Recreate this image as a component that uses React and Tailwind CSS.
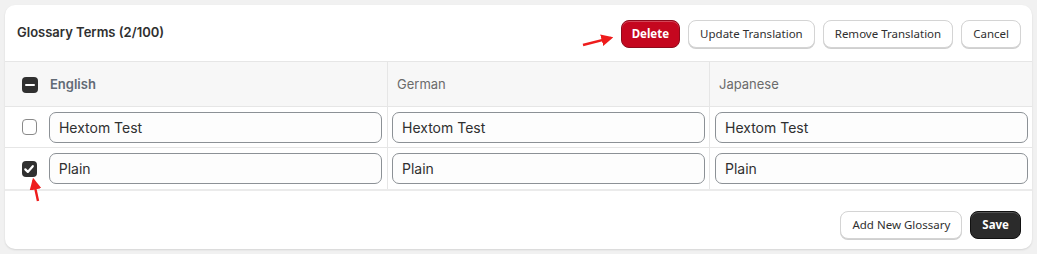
import React from "react";

const rows = [
  { en: "Hextom Test", de: "Hextom Test", ja: "Hextom Test", checked: false },
  { en: "Plain", de: "Plain", ja: "Plain", checked: true },
];

const Btn = ({ children, variant = "default" }) => {
  const styles = {
    default:
      "bg-white text-[#303030] border border-[#d4d4d4] shadow-[0_1px_0_#cfcfcf] font-normal px-[11px]",
    danger:
      "bg-[#c5071f] text-white border border-[#8e0b1c] shadow-[inset_0_1px_0_rgba(255,255,255,0.25)] font-bold px-[10px]",
    dark:
      "bg-[#2b2b2b] text-white border border-[#111] shadow-[inset_0_1px_0_rgba(255,255,255,0.2)] font-bold px-[11px]",
  };
  return (
    <button
      className={`h-[28px] rounded-[8px] text-[11.5px] leading-none font-['Noto_Sans',sans-serif] ${styles[variant]}`}
    >
      {children}
    </button>
  );
};

const Check = ({ state }) => {
  if (state === "none") {
    return <div className="w-[16px] h-[16px] rounded-[4px] border border-[#8a8a8a] bg-white" />;
  }
  return (
    <div className="w-[16px] h-[16px] rounded-[4px] bg-[#303030] flex items-center justify-center">
      {state === "minus" ? (
        <div className="w-[10px] h-[2px] bg-white rounded-full" />
      ) : (
        <svg width="12" height="12" viewBox="0 0 12 12">
          <path d="M2.3 6.4 L4.8 8.9 L9.8 3.2" fill="none" stroke="white" strokeWidth="2.2" strokeLinecap="round" strokeLinejoin="round" />
        </svg>
      )}
    </div>
  );
};

const Field = ({ value }) => (
  <input
    readOnly
    value={value}
    className="w-full h-[31px] px-[9px] rounded-[7px] border border-[#8c9196] bg-[#fdfdfd] text-[14px] text-[#303030] outline-none"
  />
);

export default function App() {
  return (
    <div className="w-[1037px] h-[254px] bg-[#f1f1f1] p-[5px] font-['Inter',sans-serif] relative">
      <div className="bg-white rounded-[10px] shadow-[0_1px_2px_rgba(0,0,0,0.12)] w-[1027px] h-[244px] overflow-hidden flex flex-col">
        <div className="flex items-center justify-between h-[56px] pl-[12px] pr-[11px]">
          <div className="text-[13px] font-semibold text-[#303030]">Glossary Terms (2/100)</div>
          <div className="flex gap-[8px] pt-[2px]">
            <Btn variant="danger">Delete</Btn>
            <Btn>Update Translation</Btn>
            <Btn>Remove Translation</Btn>
            <Btn>Cancel</Btn>
          </div>
        </div>

        <div className="grid grid-cols-[382px_322px_1fr] border-t border-[#e6e6e6] border-b-2 border-b-[#ebebeb]">
          <div className="h-[45px] bg-[#f7f7f7] flex items-center pl-[17px] gap-[12px] border-b border-[#e6e6e6] pt-[2px]">
            <Check state="minus" />
            <span className="text-[13px] font-semibold text-[#616a75]">English</span>
          </div>
          <div className="h-[45px] bg-[#f7f7f7] flex items-center pl-[9px] pt-[2px] border-l border-b border-[#e6e6e6] text-[13px] text-[#6b6b6b]">
            German
          </div>
          <div className="h-[45px] bg-[#f7f7f7] flex items-center pl-[9px] pt-[2px] border-l border-b border-[#e6e6e6] text-[13px] text-[#6b6b6b]">
            Japanese
          </div>

          {rows.map((r, i) => (
            <React.Fragment key={i}>
              <div className={`h-[41px] flex items-center pl-[17px] pr-[5px] gap-[12px] ${i === 0 ? "border-b border-[#e6e6e6]" : ""}`}>
                <Check state={r.checked ? "checked" : "none"} />
                <Field value={r.en} />
              </div>
              <div className={`h-[41px] flex items-center px-[4px] border-l border-[#e6e6e6] ${i === 0 ? "border-b" : ""}`}>
                <Field value={r.de} />
              </div>
              <div className={`h-[41px] flex items-center pl-[5px] pr-[4px] border-l border-[#e6e6e6] ${i === 0 ? "border-b" : ""}`}>
                <Field value={r.ja} />
              </div>
            </React.Fragment>
          ))}
        </div>

        <div className="flex-1 flex items-center justify-end gap-[8px] pr-[11px] pt-[10px]">
          <Btn>Add New Glossary</Btn>
          <Btn variant="dark">Save</Btn>
        </div>
      </div>

      <svg className="absolute left-0 top-0 pointer-events-none" width="1037" height="254">
        <defs>
          <marker id="ah" markerWidth="5" markerHeight="5" refX="4" refY="2.5" orient="auto">
            <path d="M0 0 L5 2.5 L0 5 Z" fill="#ee1c1c" />
          </marker>
        </defs>
        <line x1="583" y1="45" x2="611" y2="37.8" stroke="#ee1c1c" strokeWidth="2.4" markerEnd="url(#ah)" />
        <line x1="38" y1="201" x2="33.5" y2="180" stroke="#ee1c1c" strokeWidth="2.4" markerEnd="url(#ah)" />
      </svg>
    </div>
  );
}
